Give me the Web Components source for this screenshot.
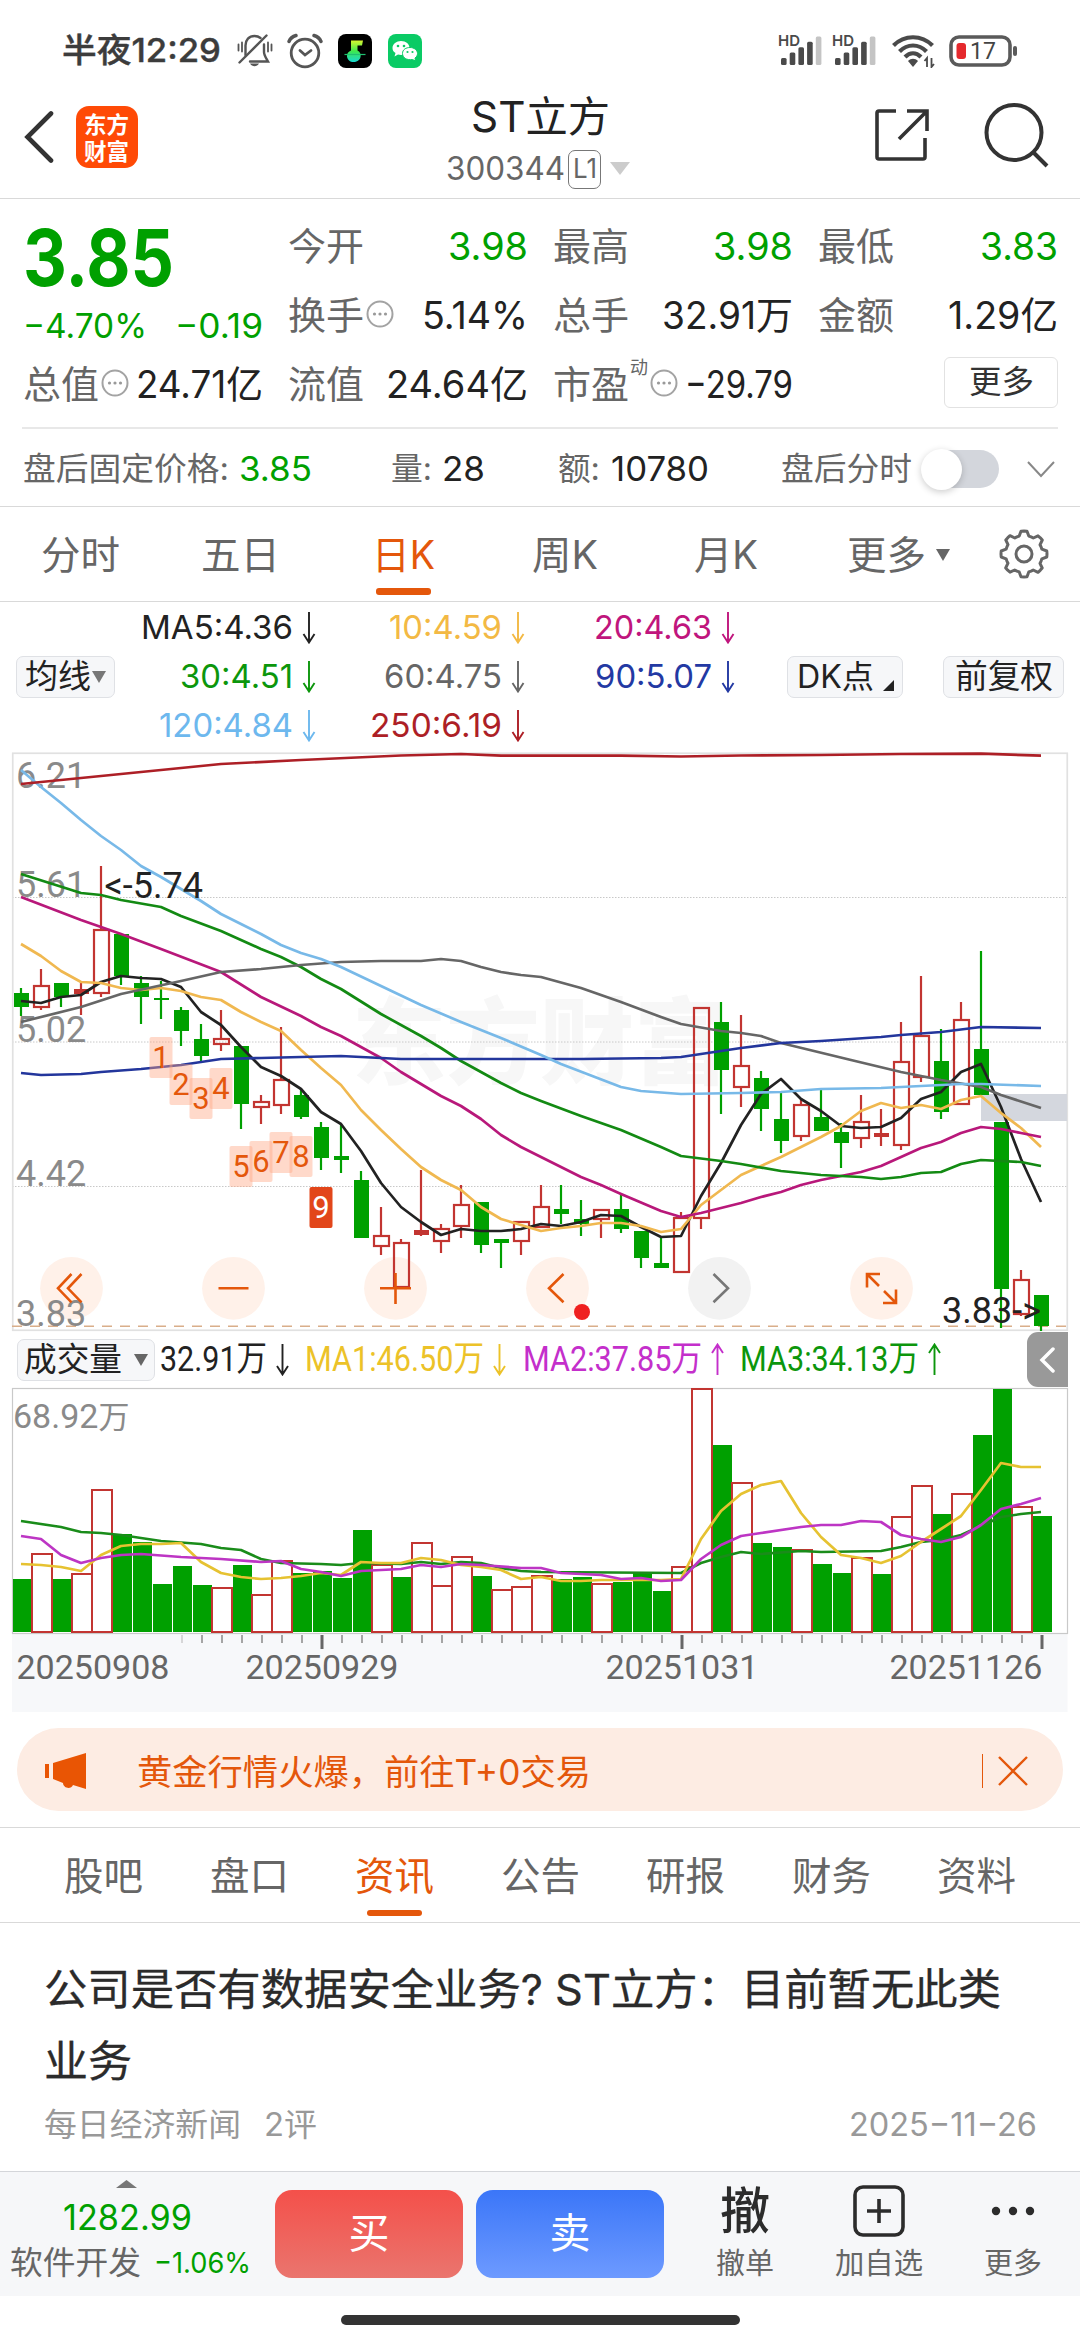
<!DOCTYPE html>
<html lang="zh-CN">
<head>
<meta charset="utf-8">
<title>ST立方 300344</title>
<style>
  html, body { margin: 0; background: #fff; }
  body {
    width: 1080px; height: 2340px; overflow: hidden; color: #333;
    font-family: Inter, "Noto Sans CJK SC", sans-serif;
  }
  stock-page { height: 2340px; }
</style>
</head>
<body>
<stock-page></stock-page>

<script>
const GREEN = "#00a000", RED = "#c23531", ORANGE = "#e4570b";

// Sets its text to an exact advance width, whatever font is picked up.
class FitText extends HTMLElement {
    connectedCallback() {
        const root = this.shadowRoot || this.attachShadow({ mode: "open" });
        const w = +this.getAttribute("w");
        const size = this.getAttribute("size");
        root.innerHTML = `<style>
            :host{display:inline-block;flex:none;width:${w}px;white-space:nowrap;line-height:1.2;${size ? `font-size:${size}px` : ""}}
            span{display:inline-block;transform-origin:0 50%}
        </style><span><slot></slot></span>`;
        const s = root.querySelector("span");
        const natural = s.getBoundingClientRect().width;
        if (natural) s.style.transform = `scaleX(${w / natural})`;
    }
}
customElements.define("fit-text", FitText);

const ft = (text, w, size, css = "") => `<fit-text w="${w}" size="${size}" style="${css}">${text}</fit-text>`;

// Base for elements whose content is fixed markup
class Part extends HTMLElement {
    connectedCallback() {
        if (this.shadowRoot) return;
        this.attachShadow({ mode: "open" }).innerHTML = this.render();
    }
}

class StatusBar extends Part {
    signal() {
        const bars = [0, 1, 2, 3, 4].map(i =>
            `<rect x="${2 + i * 8.7}" y="${23 - i * 5.4}" width="5.6" height="${7 + i * 5.4}" rx="1.5" fill="${i == 4 ? "#c4c4c4" : "#4a4a4a"}"/>`).join("");
        return `<div class="sig"><b>HD</b><svg width="44" height="32" viewBox="0 0 44 32">${bars}</svg></div>`;
    }
    render() {
        return `<style>
            :host{display:flex;box-sizing:border-box;height:72px;padding:30px 62px 0 62px;align-items:center;color:#3c3c3c}
            svg{flex:none;display:block}
            .grow{flex:1}
            .sig{position:relative;width:44px;height:32px;margin-right:10px}
            .sig b{position:absolute;left:-1px;top:0;font:600 15px/12px Inter,sans-serif;color:#4a4a4a;background:#fff}
        </style>
        ${ft("半夜12:29", 159, 33, "font-weight:500;-webkit-text-stroke:.4px")}
        <svg width="36" height="34" viewBox="0 0 36 34" fill="none" stroke="#555" stroke-width="2.4" stroke-linecap="round" style="margin-left:16px">
            <path d="M8.500 21V11.500C8.500 6 12 2 17.500 2c2.500 0 4.500.8 6 2M27 10.500V18c0 3 1.500 5 4 9.500H13"/><path d="M29.500 1.500 2.500 28.500"/>
            <path d="M13 29.500h9c-2 3.500-7 3.500-9 0z" fill="#555" stroke="none"/><path d="M1.500 10.500v6M5 8.500v9M34.500 10.500v6M31 8.500v9" stroke-width="1.800"/></svg>
        <svg width="36" height="36" viewBox="0 0 36 36" fill="none" stroke="#555" stroke-width="2.800" stroke-linecap="round" style="margin-left:14px">
            <circle cx="18" cy="20" r="13.800"/><path d="M13 17.500l5 4.500 6-4.500"/><path d="M2 8.500c1-2.500 3.500-5 7-6M34 8.500c-1-2.500-3.500-5-7-6" stroke-width="3.400"/></svg>
        <svg width="34" height="34" viewBox="0 0 34 34" style="margin-left:15px">
            <defs><linearGradient id="g" x1="0" y1="0" x2="0" y2="1"><stop offset="0" stop-color="#d8f52f"/><stop offset=".5" stop-color="#3ee84f"/><stop offset="1" stop-color="#18d8d0"/></linearGradient></defs>
            <rect width="34" height="34" rx="8" fill="#000"/>
            <path d="M13 6.500h12l-1 5h-4.500v5c3 1.500 3.500 4 3 6.500-.8 3.500-3.500 5-7 5s-6-2-6.500-5.500c-.3-3 1.500-5 4-6z" fill="url(#g)"/><path d="M6.500 20.500h21" stroke="#20c070" stroke-width="1.200"/></svg>
        <svg width="34" height="34" viewBox="0 0 34 34" style="margin-left:16px">
            <rect width="34" height="34" rx="8" fill="#0acb65"/>
            <path d="M13 7c5 0 8.500 3 8.500 7s-3.500 7-8.500 7l-3-.5L6.500 22.500 7.500 19C5.500 18 4.500 16 4.500 14c0-4 4-7 8.500-7z" fill="#fff"/>
            <path d="M22 13.500c4 0 7.500 2.500 7.500 6 0 2-1 3.500-2.500 4.500l.5 3-3-1.500c-6 1-10-2-10-6s3.500-6 7.500-6z" fill="#fff" stroke="#0acb65" stroke-width="1"/>
            <g fill="#0acb65"><circle cx="10" cy="12" r="1.300"/><circle cx="16" cy="12" r="1.300"/><circle cx="19.500" cy="18" r="1.100"/><circle cx="24.500" cy="18" r="1.100"/></g></svg>
        <div class="grow"></div>
        ${this.signal()}${this.signal()}
        <svg width="46" height="34" viewBox="0 0 46 34" fill="none" stroke="#4a4a4a" stroke-width="4.200" style="margin:0 12px 0 4px">
            <path d="M2.500 11.500c11-11 28-11 39 0"/><path d="M8.500 17.500c8-8 19-8 27 0"/><path d="M14 23c5-5 11-5 16 0"/>
            <path d="M22 33l-5-6c3-3 7-3 10 0z" fill="#4a4a4a" stroke="none"/><path d="M36 33v-9l-2.500 3M40.500 24v9l2.500-3" stroke-width="1.800"/></svg>
        <svg width="69" height="32" viewBox="0 0 69 32">
            <rect x="2" y="2" width="59" height="28" rx="8" fill="none" stroke="#5a5a5a" stroke-width="3.600"/>
            <rect x="64" y="11" width="4" height="10" rx="2" fill="#5a5a5a"/><rect x="7.500" y="8" width="9.500" height="16" rx="3" fill="#e5292d"/>
            <text x="21" y="24" font-family="Roboto" font-size="23" fill="#444">17</text></svg>`;
    }
}

class StockHeader extends Part {
    render() {
        return `<style>
            :host{display:flex;box-sizing:border-box;height:127px;padding:0 31px 0 24px;align-items:center;border-bottom:1.500px solid #d9d9d9}
            svg{flex:none;display:block}
            .logo{box-sizing:border-box;flex:none;width:62px;height:62px;margin-left:22px;padding:4px 0 0 8px;border-radius:13px;background:#ff4a06;color:#fff;font:700 22.500px/27px "Noto Sans CJK SC",sans-serif;margin-top:3px}
            .mid{flex:1;display:flex;flex-direction:column;align-items:center;padding-top:16px}
            .row{display:flex;align-items:center;height:52px}
            .lv{box-sizing:border-box;width:33px;height:39px;margin:0 9px 0 3px;border:1.500px solid #777;border-radius:7px;display:flex;align-items:center;justify-content:center;color:#666}
        </style>
        <svg width="30" height="54" viewBox="0 0 30 54" fill="none" stroke="#333" stroke-width="4.600" stroke-linecap="round" style="margin-top:3px"><path d="M27 3.500 3.500 27 27 50.500"/></svg>
        <div class="logo">东方<br>财富</div>
        <div class="mid" style="margin-left:64px">
            <div class="row" style="margin-left:4px">${ft("ST立方", 139, 42, "color:#222")}</div>
            <div class="row">${ft("300344", 119, 32, "color:#666")}<span class="lv">${ft("L1", 24, 27)}</span>
                <svg width="20" height="14" viewBox="0 0 20 14"><path d="M0 0h20L10 13z" fill="#ccc"/></svg></div>
        </div>
        <svg width="56" height="56" viewBox="0 0 56 56" fill="none" stroke="#333" stroke-width="3.600">
            <path d="M22 4H5q-2 0-2 2v44q0 2 2 2h44q2 0 2-2V31"/><path d="M33 4h20v20M52 5 25 32"/></svg>
        <svg width="66" height="66" viewBox="0 0 66 66" fill="none" stroke="#333" stroke-width="4" style="margin-left:53px"><circle cx="31" cy="30.500" r="27.500"/><path d="M50 50l14 14"/></svg>`;
    }
}

const infoDot = `<svg width="28" height="28" viewBox="0 0 28 28" style="flex:none;margin:-3px 0 0 2px"><circle cx="14" cy="14" r="12.500" fill="none" stroke="#a3a3a3" stroke-width="2"/><g fill="#999"><circle cx="8.500" cy="14" r="1.600"/><circle cx="14" cy="14" r="1.600"/><circle cx="19.500" cy="14" r="1.600"/></g></svg>`;

// One label / value pair: <quote-cell label value vw color info>
class QuoteCell extends Part {
    render() {
        const g = k => this.getAttribute(k);
        return `<style>
            :host{display:flex;align-items:center;height:69px;min-width:0}
            .v{margin-left:auto}
            i{font-style:normal;align-self:flex-start;font-size:18px;line-height:20px;margin-top:8px;color:#666;margin-left:1px}
        </style>
        ${ft(g("label"), 76, 38, "color:#666")}${g("sup") ? `<i>${g("sup")}</i>` : ""}${this.hasAttribute("info") ? infoDot : ""}
        <span class="v">${ft(g("value"), g("vw"), 38, `color:${g("color") || "#222"}`)}</span>`;
    }
}

class QuotePanel extends Part {
    render() {
        return `<style>
            :host{display:block;padding:13px 22px 0}
            .grid{display:grid;grid-template-columns:repeat(4,240px);column-gap:25px;margin-left:1px;grid-auto-rows:69px}
            .price{grid-row:span 2;color:${GREEN}}
            .price div{display:flex;align-items:center;height:91px}
            .price div+div{height:46px;justify-content:space-between}
            .more{justify-self:end;align-self:center;box-sizing:border-box;width:114px;height:51px;border:1.500px solid #e2e2e2;border-radius:6px;display:flex;align-items:center;justify-content:center;color:#333;margin:-4px 0 0}
            .rule{height:1.500px;background:#e8e8e8;margin-top:8px}
        </style>
        <div class="grid">
            <div class="price"><div>${ft("3.85", 151, 78, "font-weight:650")}</div>
                <div>${ft("−4.70%", 124, 34)}${ft("−0.19", 88, 34)}</div></div>
            <quote-cell label="今开" value="3.98" vw="80" color="${GREEN}"></quote-cell>
            <quote-cell label="最高" value="3.98" vw="80" color="${GREEN}"></quote-cell>
            <quote-cell label="最低" value="3.83" vw="78" color="${GREEN}"></quote-cell>
            <quote-cell label="换手" info value="5.14%" vw="106"></quote-cell>
            <quote-cell label="总手" value="32.91万" vw="131"></quote-cell>
            <quote-cell label="金额" value="1.29亿" vw="110"></quote-cell>
            <quote-cell label="总值" info value="24.71亿" vw="127"></quote-cell>
            <quote-cell label="流值" value="24.64亿" vw="142"></quote-cell>
            <quote-cell label="市盈" sup="动" info value="−29.79" vw="108"></quote-cell>
            <div class="more">${ft("更多", 65, 32)}</div>
        </div>
        <div class="rule"></div>`;
    }
}
customElements.define("quote-cell", QuoteCell);

class AfterHours extends Part {
    render() {
        return `<style>
            :host{display:flex;align-items:center;height:77px;padding:4px 25px 0 23px;box-sizing:border-box;color:#222}
            .l{color:#666}
            .sw{position:relative;width:73px;height:38px;border-radius:19px;background:#d3d6dc;margin-left:14px}
            .sw::before{content:"";position:absolute;left:-5px;top:-1px;width:41px;height:41px;border-radius:50%;background:#fff;box-shadow:0 2px 7px #0003}
        </style>
        <span class="l">${ft("盘后固定价格:", 206, 32)}</span>${ft("3.85", 73, 34, `color:${GREEN};margin-left:10px`)}
        <span class="l" style="margin-left:79px">${ft("量:", 41, 32)}</span>${ft("28", 43, 34, "margin-left:10px")}
        <span class="l" style="margin-left:73px">${ft("额:", 42, 32)}</span>${ft("10780", 98, 34, "margin-left:11px")}
        <span class="l" style="margin-left:72px">${ft("盘后分时", 131, 32)}</span>
        <div class="sw"></div>
        <svg width="28" height="18" viewBox="0 0 28 18" fill="none" stroke="#888" stroke-width="2" style="margin-left:auto"><path d="M1 2l13 14L27 2"/></svg>`;
    }
}

// Row of tabs between two hairlines; the slotted item with [on] is the current one
class TabStrip extends Part {
    render() {
        return `<style>
            :host{display:flex;box-sizing:border-box;height:96px;border:solid #d9d9d9;border-width:1.500px 0;align-items:stretch;color:#666}
            ::slotted(*){position:relative;display:flex;align-items:center;justify-content:center;box-sizing:border-box;padding-top:3px}
            ::slotted([on]){color:${ORANGE}}
            ::slotted([on])::after{content:"";position:absolute;left:calc(50% - 27.500px);bottom:6px;width:55px;height:6.500px;border-radius:3px;background:${ORANGE}}
        </style><slot></slot>`;
    }
}

class ToolPill extends Part {
    render() {
        return `<style>:host{display:flex;flex:none;box-sizing:border-box;height:42px;align-items:center;justify-content:center;border:1.500px solid #dfe1e5;border-radius:7px;background:#f6f7f9;color:#222;gap:4px}</style><slot></slot>`;
    }
}

const arrow = (color, up, w = 14, h = 33) => `<svg width="${w}" height="${h}" viewBox="0 0 14 33" fill="none" stroke="${color}" stroke-width="1.900" style="flex:none;${up ? "transform:rotate(180deg)" : ""}"><path d="M7 1v30M1.500 23 7 31.500 12.500 23"/></svg>`;

class MaLegend extends Part {
    render() {
        const items = [
            ["MA5:4.36", 152, "#222"], ["10:4.59", 113, "#f3b944"], ["20:4.63", 118, "#c0157d"],
            ["30:4.51", 113, "#0c960c"], ["60:4.75", 118, "#666"], ["90:5.07", 117, "#2339a3"],
            ["120:4.84", 134, "#6db8ee"], ["250:6.19", 132, "#ad1f26"],
        ];
        return `<style>
            :host{display:flex;box-sizing:border-box;height:150.500px;padding-left:16px;align-items:center}
            .g{display:grid;grid-template-columns:201px 209px 210px;grid-auto-rows:49px}
            .g div{display:flex;align-items:center;justify-content:flex-end;gap:9px}
        </style>
        <tool-pill style="width:99px;gap:1px">${ft("均线", 66, 33)}<svg width="14" height="12"><path d="M0 0h14L7 12z" fill="#777"/></svg></tool-pill>
        <div class="g">${items.map(([t, w, c]) => `<div>${ft(t, w, 33, `color:${c}`)}${arrow(c)}</div>`).join("")}</div>
        <tool-pill style="width:116px;margin-left:52px">${ft("DK点", 77, 32)}<svg width="11" height="11" style="align-self:flex-end;margin-bottom:6px;margin-left:5px"><path d="M11 0v11H0z" fill="#222"/></svg></tool-pill>
        <tool-pill style="width:121px;margin-left:40px">${ft("前复权", 98, 33)}</tool-pill>`;
    }
}

const X = i => 21 + i * 20;
const line = (pts, color, w = 2.7) =>
    `<polyline fill="none" stroke="${color}" stroke-width="${w}" stroke-linejoin="round" points="${pts.map(([i, y]) => X(i) + "," + y).join(" ")}"/>`;
const seq = ys => ys.map((y, i) => [i, y]);

// Candles: colour (s = solid red), body top, body bottom, high, low
const CANDLES = `g 993 1007 988 1016|r 985 1008 969 1010|g 983 997 983 1007|s 989 994 983 1015|r 929 994 866 997|g 934 976 934 985
g 983 997 976 1024|g 998 1000 981 1019|g 1010 1031 1007 1046|g 1039 1056 1024 1061|r 1038 1045 1010 1051|g 1046 1104 1046 1129
r 1101 1108 1095 1124|r 1079 1106 1027 1114|g 1095 1117 1089 1119|g 1127 1158 1122 1170|g 1156 1160 1124 1173|g 1180 1238 1171 1238
r 1235 1247 1207 1255|r 1242 1288 1239 1288|s 1230 1235 1170 1236|r 1228 1242 1224 1253|r 1204 1227 1185 1238|g 1202 1245 1202 1253
g 1239 1243 1239 1268|r 1221 1242 1221 1255|r 1206 1228 1185 1228|g 1209 1214 1185 1224|g 1219 1224 1200 1236|r 1209 1220 1209 1238
g 1209 1229 1193 1233|g 1231 1258 1231 1268|g 1263 1268 1238 1268|r 1217 1273 1212 1273|r 1007 1219 1007 1229|g 1022 1070 1002 1114
r 1065 1088 1015 1107|g 1078 1109 1071 1131|g 1119 1141 1093 1153|r 1104 1137 1098 1141|g 1117 1131 1088 1131|g 1132 1143 1123 1168
r 1121 1139 1095 1148|s 1133 1137 1109 1146|r 1061 1146 1022 1150|r 1035 1078 976 1082|g 1061 1112 1029 1119|r 1019 1105 1002 1105
g 1049 1095 951 1095|g 1122 1289 1122 1328|r 1279 1315 1270 1316|g 1295 1326 1295 1331`
    .split(/[|\n]/).map(s => { const [k, ...v] = s.trim().split(" "); return [k, ...v.map(Number)]; });

class KChart extends Part {
    candle([k, t, b, hi, lo], i) {
        const x = X(i), c = k == "g" ? GREEN : RED;
        const wick = `<path d="M${x} ${hi}V${t}M${x} ${b}V${lo}" stroke="${c}" stroke-width="2.2"/>`;
        return wick + (k == "r"
            ? `<rect x="${x - 7}" y="${t + 1}" width="15" height="${b - t - 2}" fill="none" stroke="${c}" stroke-width="2.2"/>`
            : `<rect x="${x - 7}" y="${t}" width="15" height="${b - t}" fill="${c}"/>`);
    }
    render() {
        const ma5 = seq([1001,1003,997,995,982,976,978,979,987,1012,1025,1047,1067,1076,1089,1112,1124,1151,1183,1207,1222,1235,1229,1231,1231,1229,1224,1226,1222,1215,1216,1227,1237,1236,1196,1163,1125,1094,1079,1099,1111,1126,1128,1127,1118,1099,1092,1072,1064,1107,1159,1202]);
        const ma10 = seq([944,956,971,982,983,988,990,988,991,997,1000,1012,1022,1031,1050,1068,1085,1110,1130,1149,1167,1180,1190,1207,1219,1225,1231,1228,1226,1223,1223,1226,1232,1229,1205,1190,1175,1166,1157,1147,1137,1126,1111,1103,1108,1105,1109,1100,1096,1113,1128,1147]);
        const ma20 = [[0,897],[3,920],[4,927],[5,934],[7,949],[10,972],[12,997],[14,1016],[15,1027],[16,1036],[18,1058],[19,1072],[21,1096],[22,1106],[23,1119],[24,1135],[25,1147],[26,1157],[27,1167],[28,1177],[29,1185],[30,1194],[32,1211],[33,1217],[34,1213],[36,1203],[37,1197],[38,1192],[39,1185],[40,1180],[42,1172],[43,1166],[45,1148],[46,1142],[47,1133],[48,1127],[49,1129],[50,1133],[51,1137]];
        const ma30 = [[0,874],[3,893],[4,895],[5,900],[7,907],[8,916],[10,931],[12,949],[13,957],[14,967],[15,979],[16,989],[18,1014],[20,1036],[21,1048],[22,1061],[23,1072],[24,1083],[25,1093],[26,1101],[28,1116],[30,1130],[32,1147],[33,1156],[35,1161],[36,1164],[38,1171],[39,1173],[40,1175],[42,1177],[43,1179],[44,1177],[45,1173],[46,1172],[47,1164],[48,1160],[50,1162],[51,1166]];
        const ma60 = [[0,1022],[3,1007],[5,994],[8,981],[10,972],[12,969],[14,965],[16,962],[18,961],[20,961],[21,959],[22,961],[23,967],[24,972],[25,975],[26,977],[28,988],[30,1002],[32,1017],[33,1024],[35,1031],[36,1033],[37,1036],[38,1043],[41.5,1060],[44,1072],[45,1076],[46,1080],[48,1087],[49,1095],[51,1108]];
        const ma90 = [[0,1073],[1,1075],[3,1074],[4,1072],[6,1069],[8,1065],[10,1059],[12,1058],[16,1056],[19,1059],[28,1059],[32,1058],[33,1057],[35,1051],[36,1048],[38,1043],[40,1041],[43,1037],[44,1035],[46,1032],[48,1027],[51,1028]];
        const ma120 = [[0,770],[1,787],[2,803],[3,820],[4,836],[5,850],[6,866],[7,877],[8,889],[9,901],[10,914],[11,924],[12,934],[13,945],[14,953],[15,959],[16,967],[18,986],[20,1005],[22,1022],[24,1038],[26,1055],[27,1064],[30,1087],[31,1091],[33,1094],[36,1093],[38,1092],[40,1089],[43,1088],[45,1086],[47,1084],[48,1084],[51,1086]];
        const ma250 = [[0,784],[3,778],[6,772],[10,764],[14,760],[19,755.5],[22,754],[24,755.7],[30,755.7],[33,756.5],[36,755.5],[40,755],[44,754],[48,753.7],[51,755.7]];
        const labels = [["6.21", 788], ["5.61", 897], ["5.02", 1042], ["4.42", 1186], ["3.83", 1326]];
        // Nine-turn markers under the falling candles
        const marks = [1037, 1064, 1078, 1068, 1146, 1141, 1132, 1136, 1187];
        const cx = n => 71.5 + n * 162;
        return `<style>:host{display:block}svg{display:block;overflow:visible}text{font-family:Roboto,"Noto Sans CJK SC",sans-serif}</style>
        <svg width="1080" height="580" viewBox="0 752 1080 580">
            <text x="352" y="1077" font-size="94" font-weight="900" fill="#f7f7f7">东方财富</text>
            <path d="M12 897.500H1067M12 1042H1067M12 1186.500H1067" stroke="#c8c8c8" stroke-width="1" stroke-dasharray="1.500 1.500"/>
            <rect x="12.750" y="753.250" width="1054.500" height="577" fill="none" stroke="#e1e1e1" stroke-width="1.700"/>
            <path d="M12 1326.200H1067" stroke="#d9ae8a" stroke-width="1.600" stroke-dasharray="10 8"/>
            ${[0, 1, 2, 3, 4, 5].map(n => `<circle cx="${cx(n)}" cy="1288.300" r="31.400" fill="${n == 4 ? "#f2f2f2" : "#fff1e9"}"/>`).join("")}
            ${labels.map(([t, y]) => `<text x="16" y="${y}" font-size="36" fill="#8a8a8a">${t}</text>`).join("")}
            <rect x="981" y="1094" width="86" height="27" fill="#d4d7de"/>
            ${CANDLES.map((c, i) => this.candle(c, i)).join("")}
            ${line(ma5, "#222")}${line(ma10, "#f0b850")}${line(ma20, "#b8187a")}${line(ma30, "#138a13")}
            ${line(ma60, "#666")}${line(ma90, "#23369c")}${line(ma120, "#78b9e8")}${line(ma250, "#ad1f26")}
            ${marks.map((y, n) => `<rect x="${X(n + 7) - 11.5}" y="${y}" width="23" height="41" rx="2" fill="${n == 8 ? "#e2461a" : "#ffa581"}" fill-opacity="${n == 8 ? 1 : .42}"/>
                <text x="${X(n + 7)}" y="${y + 31}" font-size="31" text-anchor="middle" fill="${n == 8 ? "#fff" : ORANGE}">${n + 1}</text>`).join("")}
            <text x="104.500" y="898" font-size="36" fill="#222">&lt;-5.74</text>
            <text x="942" y="1323" font-size="36" fill="#222">3.83-&gt;</text>
            <g fill="none" stroke="${ORANGE}" stroke-width="2.600">
                <path d="M71.500 1274 58 1288.300l13.500 14M81.500 1274 68 1288.300l13.500 14"/>
                <path d="M218.500 1288.300h30M380 1288.300h31M395.500 1273v31"/>
                <path d="M563.500 1274 549 1288.300l14.500 14"/><path d="M713.500 1274l14.500 14.300-14.500 14" stroke="#777"/>
                <path d="M879 1286l-12-12m0 13.500V1274h13M884 1291l12 12m0-13.500V1303h-13"/>
            </g>
            <circle cx="582" cy="1312" r="8" fill="#ef2020"/>
        </svg>`;
    }
}

class VolLegend extends Part {
    render() {
        const items = [
            ["32.91万", 107, "#222", 0, 5], ["MA1:46.50万", 179, "#ecc228", 0, 15],
            ["MA2:37.85万", 179, "#c42fcb", 1, 16], ["MA3:34.13万", 179, "#0c960c", 1, 15],
        ];
        return `<style>
            :host{display:flex;height:55px;padding:0 12.500px 0 17px;align-items:center;font-family:Roboto,"Noto Sans CJK SC",sans-serif}
            .side{width:40.500px;height:55px;margin-left:auto;background:#999;border-radius:11px 0 0 11px;display:flex;align-items:center;justify-content:center}
        </style>
        <tool-pill style="width:138px;gap:12px">${ft("成交量", 98, 33)}<svg width="14" height="12"><path d="M0 0h14L7 12z" fill="#666"/></svg></tool-pill>
        ${items.map(([t, w, c, up, ml]) => `${ft(t, w, 35, `color:${c};margin:0 8px 0 ${ml}px`)}${arrow(c, up, 15)}`).join("")}
        <div class="side"><svg width="16" height="26" viewBox="0 0 16 26" fill="none" stroke="#fff" stroke-width="3.500" stroke-linecap="round"><path d="M14 2 3 13l11 11"/></svg></div>`;
    }
}

const VOL = `g1579 r1553 g1579 r1573 r1489 g1534 g1542 g1584 g1566 g1585 r1587 g1565 r1594 r1560 g1573 g1571 g1578 g1530 r1564 g1577 r1542 r1585 r1556 g1576 r1589 r1586 r1575 g1579 g1577 r1583 g1582 g1572 g1591 r1566 r1388 g1445 r1482 g1543 g1547 r1549 g1564 g1573 r1557 g1574 r1516 r1485 g1514 r1493 g1435 g1389 r1506 g1516`.split(" ");

class VolChart extends Part {
    render() {
        const m1 = seq([1564,1565,1567,1571,1555,1546,1544,1544,1543,1562,1573,1577,1579,1578,1576,1573,1575,1562,1563,1563,1558,1560,1565,1567,1570,1579,1577,1581,1581,1580,1580,1580,1580,1579,1539,1511,1494,1485,1481,1513,1537,1555,1558,1563,1556,1542,1529,1516,1490,1463,1467,1467]);
        const m2 = [[0,1536],[1,1539],[2,1555],[3,1563],[4,1558],[5,1555],[6,1554],[8,1557],[10,1559],[12,1562],[13,1561],[14,1569],[15,1572],[16,1576],[17,1571],[19,1569],[20,1565],[21,1567],[22,1564],[23,1565],[25,1568],[26,1568],[27,1573],[29,1575],[30,1579],[31,1578],[32,1581],[33,1580],[34,1559],[35,1545],[36,1536],[37,1533],[39,1527],[40,1525],[41,1525],[42,1521],[43,1522],[44,1535],[45,1539],[46,1542],[47,1537],[48,1525],[49,1509],[50,1504],[51,1498]];
        const m3 = [[0,1521],[2,1527],[3,1532],[4,1533],[5,1535],[7,1541],[9,1544],[10,1548],[11,1550],[12,1559],[13,1563],[15,1564],[16,1565],[17,1563],[19,1564],[20,1562],[21,1564],[22,1562],[23,1563],[24,1568],[25,1571],[26,1572],[33,1573],[34,1563],[35,1557],[36,1552],[37,1554],[39,1551],[40,1552],[43,1551],[44,1547],[45,1542],[46,1540],[47,1535],[48,1526],[49,1517],[50,1514],[51,1512]];
        const bars = VOL.map((s, i) => {
            const y = +s.slice(1), x = X(i);
            return s[0] == "g" ? `<rect x="${x - 8}" y="${y}" width="19" height="${1632 - y}" fill="${GREEN}"/>`
                : `<rect x="${x - 9}" y="${y + 1}" width="20" height="${1631 - y}" fill="#fff" stroke="${RED}" stroke-width="2"/>`;
        }).join("");
        const ticks = [];
        for (let i = 8; i < 52; i++) {
            const major = [15, 33, 51].includes(i);
            ticks.push(`<path d="M${X(i) + 1} 1635v${major ? 14 : 8}" stroke="${major ? "#666" : "#909090"}" stroke-width="${major ? 3 : 1.6}" opacity="${i == 8 ? .4 : 1}"/>`);
        }
        return `<style>:host{display:block}svg{display:block}text{font-family:Roboto,"Noto Sans CJK SC",sans-serif;font-size:34px}</style>
        <svg width="1080" height="325" viewBox="0 1387 1080 325">
            <rect x="12" y="1634" width="1055.500" height="78" fill="#f7f8fa"/>
            <rect x="12.500" y="1388.500" width="1055" height="245" fill="none" stroke="#c9c9c9" stroke-width="1.200"/>
            <text x="13" y="1428" fill="#8a8a8a">68.92<tspan font-size="31">万</tspan></text>
            ${bars}${line(m3, "#1a8c1a", 2.6)}${line(m1, "#e6c231", 2.7)}${line(m2, "#bd35c4", 2.7)}
            ${ticks.join("")}
            <g fill="#666"><text x="16.500" y="1679">20250908</text><text x="245.500" y="1679">20250929</text><text x="605.500" y="1679">20251031</text><text x="889.500" y="1679">20251126</text></g>
        </svg>`;
    }
}

class PromoBanner extends Part {
    render() {
        return `<style>:host{display:flex;box-sizing:border-box;height:83px;margin:16px 17px;padding:2px 34px 0 27px;border-radius:42px;background:#fdece3;color:${ORANGE};align-items:center}
            i{width:1.500px;height:34px;background:${ORANGE};margin-left:auto}</style>
        <svg width="43" height="38" viewBox="0 0 43 38" fill="#e95504"><path d="M1 12h4v14H1zM9 11 42 1v36l-13-4c-2 5-10 3-10-2L9 27z"/></svg>
        ${ft("黄金行情火爆，前往T+0交易", 454, 35, "margin:2px 0 0 50px")}
        <i></i><svg width="32" height="30" viewBox="0 0 32 30" fill="none" stroke="${ORANGE}" stroke-width="2.400" style="margin-left:14px"><path d="M2 1l28 28M30 1 2 29"/></svg>`;
    }
}

class NewsItem extends Part {
    render() {
        return `<style>
            :host{display:block;box-sizing:border-box;height:248px;padding:31px 43px 0 44px}
            h3{margin:0;font-weight:400;color:#2b2b2b;-webkit-text-stroke:.3px #2b2b2b}
            h3 div{height:72px;display:flex;align-items:center}
            .m{display:flex;align-items:center;height:54px;color:#999;gap:23px}
        </style>
        <h3><div>${ft("公司是否有数据安全业务? ST立方：目前暂无此类", 957, 43)}</div><div>${ft("业务", 88, 43)}</div></h3>
        <div class="m">${ft("每日经济新闻", 197, 32)}${ft("2评", 53, 32)}${ft("2025−11−26", 188, 32, "margin-left:auto")}</div>`;
    }
}

class TradeBar extends Part {
    render() {
        return `<style>
            :host{display:flex;box-sizing:border-box;height:125px;border-top:1.500px solid #d4d6da;background:#f6f7f9;color:#666}
            .idx{width:260px;display:flex;flex-direction:column;align-items:center;color:${GREEN}}
            .idx svg{margin:8px 8px 0 0}
            .idx .n{height:46px;margin:6px 6px 0 0;display:flex;align-items:center}
            .idx .s{display:flex;align-items:center;gap:13px;height:46px}
            .b{width:188px;height:88px;border-radius:17px;display:flex;align-items:center;justify-content:center;color:#fff;margin:18px 0 0 15px}
            .buy{background:linear-gradient(#f4504a,#ea756e)}
            .sell{background:linear-gradient(#3b76f8,#6d9aff);margin-left:13px}
            .a{display:flex;flex-direction:column;align-items:center;width:134px}
            .a div{height:52px;margin-top:13px;display:flex;align-items:center;color:#2c2c2c}
            .a fit-text{margin-top:10px}
            .a div fit-text{margin:0}
        </style>
        <div class="idx"><svg width="21" height="8"><path d="M0 8 10.500 0 21 8z" fill="#777"/></svg>
            <div class="n">${ft("1282.99", 129, 35)}</div>
            <div class="s">${ft("软件开发", 131, 32, "color:#666")}${ft("−1.06%", 97, 29)}</div></div>
        <div class="b buy">${ft("买", 41, 41)}</div><div class="b sell">${ft("卖", 41, 41)}</div>
        <div class="a" style="margin-left:14px"><div>${ft("撤", 50, 50, "font-weight:500")}</div>${ft("撤单", 58, 29)}</div>
        <div class="a"><div><svg width="52" height="52" viewBox="0 0 52 52" fill="none" stroke="#2c2c2c" stroke-width="3.600"><rect x="2" y="2" width="48" height="48" rx="8"/><path d="M14 26h24M26 14v24"/></svg></div>${ft("加自选", 88, 29)}</div>
        <div class="a"><div><svg width="46" height="10" fill="#2c2c2c"><circle cx="6" cy="5" r="4.200"/><circle cx="23" cy="5" r="4.200"/><circle cx="40" cy="5" r="4.200"/></svg></div>${ft("更多", 58, 29)}</div>`;
    }
}

class StockPage extends Part {
    render() {
        const gear = Array.from({ length: 48 }, (_, k) => {
            const a = k / 48 * Math.PI * 2, r = k % 6 < 3 ? 23 : 18.5;
            return `${(25 + r * Math.sin(a - .13)).toFixed(1)},${(25 - r * Math.cos(a - .13)).toFixed(1)}`;
        }).join(" ");
        const news = ["股吧", "盘口", "资讯", "公告", "研报", "财务", "资料"];
        return `<style>
            :host{display:flex;flex-direction:column}
            :host>*{flex:none}
            .tri{margin-left:10px}
            .home{width:399px;height:10px;border-radius:5px;background:#333;margin:19px auto 0}
        </style>
        <status-bar></status-bar>
        <stock-header></stock-header>
        <quote-panel></quote-panel>
        <after-hours></after-hours>
        <tab-strip>
            <div style="width:160px">${ft("分时", 79, 39)}</div>
            <div style="width:161px">${ft("五日", 79, 39)}</div>
            <div on style="width:164px">${ft("日K", 63, 39)}</div>
            <div style="width:159px">${ft("周K", 66, 39)}</div>
            <div style="width:163px">${ft("月K", 64, 39)}</div>
            <div style="width:182px">${ft("更多", 79, 39)}<svg class="tri" width="14" height="12"><path d="M0 0h14L7 12z" fill="#666"/></svg></div>
            <div style="width:70px;padding-top:0"><svg width="50" height="50" viewBox="0 0 50 50" fill="none" stroke="#666" stroke-width="3" stroke-linejoin="round"><polygon points="${gear}"/><circle cx="25" cy="25" r="8"/></svg></div>
        </tab-strip>
        <ma-legend></ma-legend>
        <k-chart></k-chart>
        <vol-legend></vol-legend>
        <vol-chart></vol-chart>
        <promo-banner></promo-banner>
        <tab-strip style="padding-left:31px">${news.map((t, i) => `<div${i == 2 ? " on" : ""} style="width:145.500px">${ft(t, 79, 39)}</div>`).join("")}</tab-strip>
        <news-item></news-item>
        <trade-bar></trade-bar>
        <div class="home"></div>`;
    }
}

const parts = {
    "tool-pill": ToolPill, "tab-strip": TabStrip, "status-bar": StatusBar, "stock-header": StockHeader,
    "quote-panel": QuotePanel, "after-hours": AfterHours, "ma-legend": MaLegend, "k-chart": KChart,
    "vol-legend": VolLegend, "vol-chart": VolChart, "promo-banner": PromoBanner, "news-item": NewsItem,
    "trade-bar": TradeBar, "stock-page": StockPage,
};
for (const [name, cls] of Object.entries(parts)) customElements.define(name, cls);
</script>
</body>
</html>
